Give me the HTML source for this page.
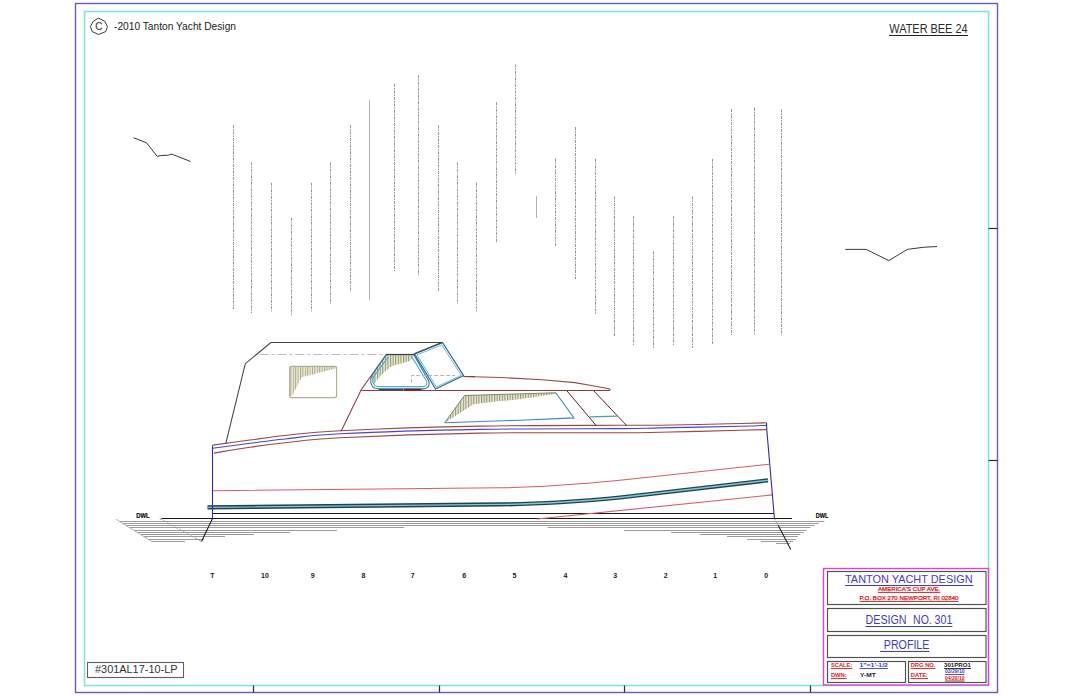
<!DOCTYPE html>
<html><head><meta charset="utf-8">
<style>
html,body{margin:0;padding:0;background:#fff;width:1073px;height:696px;overflow:hidden}
svg{position:absolute;left:0;top:0;display:block}
text{font-family:"Liberation Sans",sans-serif}
</style></head>
<body>
<svg width="1073" height="696" viewBox="0 0 1073 696">
<!-- borders -->
<rect x="75.5" y="3.5" width="922" height="689" fill="none" stroke="#6a5cc8" stroke-width="1.4"/>
<rect x="84.5" y="11.5" width="904" height="674" fill="none" stroke="#7fe6dc" stroke-width="1.6"/>
<g stroke="#2a2a60" stroke-width="1.2">
<line x1="253.5" y1="685.5" x2="253.5" y2="692.5"/>
<line x1="439.5" y1="685.5" x2="439.5" y2="692.5"/>
<line x1="624.5" y1="685.5" x2="624.5" y2="692.5"/>
<line x1="810.5" y1="685.5" x2="810.5" y2="692.5"/>
<line x1="988.5" y1="228.5" x2="997.5" y2="228.5"/>
<line x1="988.5" y1="460.5" x2="997.5" y2="460.5"/>
</g>
<!-- copyright -->
<polygon points="98.5,18.1 104.8,21.3 107.4,26.6 105.8,31.5 98.5,34.5 92.1,31.5 90.4,26.6 93.3,21.3" fill="none" stroke="#3a3a3a" stroke-width="1"/>
<text x="95.2" y="29.8" font-size="10" fill="#4a4a4a" stroke="#4a4a4a" stroke-width="0.25">C</text>
<text x="114" y="30" font-size="10.5" fill="#222" textLength="122" lengthAdjust="spacingAndGlyphs">-2010 Tanton Yacht Design</text>
<!-- title -->
<text x="889.3" y="32.6" font-size="12" fill="#2a2a2a" textLength="78.3" lengthAdjust="spacingAndGlyphs">WATER BEE 24</text>
<line x1="889" y1="35.5" x2="968" y2="35.5" stroke="#222" stroke-width="1.2"/>
<!-- birds -->
<polyline points="133.6,137.7 146.6,142.9 157.1,156.3 160.8,155.6 168.3,155.2 171.2,154.1 173.5,154.8 190.6,161.5" fill="none" stroke="#3a3a3a" stroke-width="1"/>
<polyline points="845.3,249.4 866.3,249.4 888.8,260.6 907.3,249.4 923.2,247.3 937,246.5" fill="none" stroke="#3a3a3a" stroke-width="1"/>
<!-- rain lines -->
<g stroke="#969696" stroke-width="1" stroke-dasharray="3 1 1.5 1">
<line x1="233.5" y1="125.0" x2="233.5" y2="309.0"/>
<line x1="251.5" y1="162.3" x2="251.5" y2="313.0"/>
<line x1="271.5" y1="182.8" x2="271.5" y2="311.4"/>
<line x1="291.5" y1="217.8" x2="291.5" y2="316.0"/>
<line x1="311.5" y1="182.8" x2="311.5" y2="311.4"/>
<line x1="330.5" y1="162.3" x2="330.5" y2="303.7"/>
<line x1="350.5" y1="125.0" x2="350.5" y2="292.0"/>
<line x1="369.5" y1="99.8" x2="369.5" y2="300.3" stroke-dasharray="none" stroke="#b2b2b2"/>
<line x1="394.5" y1="84.0" x2="394.5" y2="271.2"/>
<line x1="418.5" y1="75.2" x2="418.5" y2="275.3"/>
<line x1="438.5" y1="125.5" x2="438.5" y2="292.0"/>
<line x1="457.5" y1="162.3" x2="457.5" y2="303.6"/>
<line x1="476.5" y1="182.6" x2="476.5" y2="311.4"/>
<line x1="496.5" y1="102.2" x2="496.5" y2="243.0"/>
<line x1="515.5" y1="64.4" x2="515.5" y2="175.2"/>
<line x1="536.5" y1="196.0" x2="536.5" y2="218.1" stroke-dasharray="none" stroke="#b0b0b0"/>
<line x1="555.5" y1="158.5" x2="555.5" y2="246.5"/>
<line x1="575.5" y1="127.0" x2="575.5" y2="279.0"/>
<line x1="595.5" y1="158.9" x2="595.5" y2="313.9"/>
<line x1="614.5" y1="196.5" x2="614.5" y2="337.2"/>
<line x1="633.5" y1="216.1" x2="633.5" y2="346.1"/>
<line x1="653.5" y1="251.4" x2="653.5" y2="349.2"/>
<line x1="673.5" y1="216.1" x2="673.5" y2="346.1"/>
<line x1="692.5" y1="196.5" x2="692.5" y2="348.0"/>
<line x1="712.5" y1="158.9" x2="712.5" y2="344.2"/>
<line x1="731.5" y1="109.0" x2="731.5" y2="335.2"/>
<line x1="754.5" y1="107.7" x2="754.5" y2="335.2"/>
<line x1="781.5" y1="109.5" x2="781.5" y2="335.2"/>
</g>

<!-- ===== BOAT ===== -->
<defs>
<pattern id="hatch" patternUnits="userSpaceOnUse" width="2.4" height="10">
<rect width="2.4" height="10" fill="#eeeed8"/>
<rect x="0" width="1" height="10" fill="#a8a888"/>
</pattern>
<pattern id="hatch2" patternUnits="userSpaceOnUse" width="2.6" height="10">
<rect width="2.6" height="10" fill="#ececd4"/>
<rect x="0" width="1.1" height="10" fill="#949474"/>
</pattern>
</defs>
<!-- water hatching -->
<g stroke="#9c9c9c" stroke-width="1">
<line x1="119.6" y1="521.5" x2="824.3" y2="521.5"/>
<line x1="122.9" y1="523.5" x2="818.7" y2="523.5"/>
<line x1="126.1" y1="525.5" x2="814.6" y2="525.5"/>
<line x1="129.3" y1="527.5" x2="404" y2="527.5"/>
<line x1="547.7" y1="527.5" x2="810.4" y2="527.5"/>
<line x1="134.1" y1="530.5" x2="337" y2="530.5"/>
<line x1="624" y1="530.5" x2="806.6" y2="530.5"/>
<line x1="137.4" y1="532.5" x2="290" y2="532.5"/>
<line x1="671" y1="532.5" x2="803.8" y2="532.5"/>
<line x1="140.6" y1="534.5" x2="254" y2="534.5"/>
<line x1="700" y1="534.5" x2="800.4" y2="534.5"/>
<line x1="143.8" y1="536.5" x2="225" y2="536.5"/>
<line x1="727" y1="536.5" x2="797.8" y2="536.5"/>
<line x1="148.6" y1="539.5" x2="204" y2="539.5"/>
<line x1="747" y1="539.5" x2="795.9" y2="539.5"/>
<line x1="151.8" y1="541.5" x2="185" y2="541.5"/>
<line x1="761" y1="541.5" x2="793.1" y2="541.5"/>
<line x1="776" y1="543.5" x2="790.3" y2="543.5"/>
<line x1="116.1" y1="519.3" x2="152" y2="541.6" stroke="#b0b0b0"/>
</g>
<line x1="161.5" y1="518.5" x2="792" y2="518.5" stroke="#1a1a1a" stroke-width="1.1"/>
<line x1="212.5" y1="513.5" x2="774" y2="513.5" stroke="#1a1a1a" stroke-width="1"/>
<!-- skegs -->
<polyline points="212.5,518.5 201.5,541.5" fill="none" stroke="#222" stroke-width="1.1"/>
<line x1="201.5" y1="541.5" x2="159.7" y2="518.5" stroke="#999" stroke-width="1" stroke-dasharray="3 1.5"/>
<polyline points="778.2,525.2 790.8,549.4" fill="none" stroke="#222" stroke-width="1.1"/>
<line x1="774.5" y1="518.5" x2="778.2" y2="525.2" stroke="#999" stroke-width="1" stroke-dasharray="2 1"/>
<!-- DWL text -->
<text x="136.3" y="518" font-size="6.6" font-weight="bold" fill="#111" stroke="#111" stroke-width="0.2" textLength="13.4" lengthAdjust="spacingAndGlyphs">DWL</text>
<text x="815.7" y="518" font-size="6.6" font-weight="bold" fill="#111" stroke="#111" stroke-width="0.2" textLength="12.8" lengthAdjust="spacingAndGlyphs">DWL</text>

<!-- hull stripes -->
<path d="M212.5,490.7 L500,487.8 C540,487.4 575,484.6 620,480.3 L769,464.2" fill="none" stroke="#e05868" stroke-width="1.1"/>
<path d="M537,519 C580,515 680,504.5 772,494.9" fill="none" stroke="#e05868" stroke-width="1.1"/>
<!-- rubrail -->
<path d="M207.5,507.3 L500,504.4 C540,504.1 575,501.8 620,497.5 L768,480.3" fill="none" stroke="#1c4454" stroke-width="4.2"/>
<path d="M207.5,507.3 L500,504.4 C540,504.1 575,501.8 620,497.5 L768,480.3" fill="none" stroke="#88c4da" stroke-width="1.3"/>

<!-- sheer lines -->
<path d="M212.5,445.10 C218.8,444.25 237.9,441.60 250.0,440.00 C262.1,438.40 270.0,437.05 285.0,435.50 C300.0,433.95 307.5,432.27 340.0,430.70 C372.5,429.13 433.3,427.00 480.0,426.10 C526.7,425.20 590.0,425.45 620.0,425.30 C650.0,425.15 640.0,425.50 660.0,425.20 C680.0,424.90 722.2,423.90 740.0,423.50 C757.8,423.10 762.1,422.92 766.5,422.80" fill="none" stroke="#9c4848" stroke-width="1.1"/>
<path d="M212.5,448.20 C218.8,447.38 237.9,444.83 250.0,443.30 C262.1,441.77 270.0,440.58 285.0,439.00 C300.0,437.42 307.5,435.40 340.0,433.80 C372.5,432.20 433.3,430.27 480.0,429.40 C526.7,428.53 590.0,428.85 620.0,428.60 C650.0,428.35 640.0,428.28 660.0,427.90 C680.0,427.52 722.2,426.72 740.0,426.30 C757.8,425.88 762.1,425.55 766.5,425.40" fill="none" stroke="#4444d8" stroke-width="1.1"/>
<path d="M214.0,453.10 C220.0,452.12 238.2,448.92 250.0,447.20 C261.8,445.48 270.0,444.37 285.0,442.80 C300.0,441.23 307.5,439.42 340.0,437.80 C372.5,436.18 433.3,433.93 480.0,433.10 C526.7,432.27 590.0,432.93 620.0,432.80 C650.0,432.67 640.0,432.72 660.0,432.30 C680.0,431.88 722.2,430.75 740.0,430.30 C757.8,429.85 762.1,429.72 766.5,429.60" fill="none" stroke="#9c4848" stroke-width="1.1"/>
<!-- transom & bow -->
<line x1="212.5" y1="445.4" x2="212.5" y2="518.5" stroke="#3428b4" stroke-width="1.1"/>
<polyline points="766.5,422.7 766.8,430 774,513.5 774.5,518.5" fill="none" stroke="#3428b4" stroke-width="1.1"/>

<!-- canopy -->
<polyline points="225.7,443.8 245.3,363.7 270.9,342.5 442.5,342.5" fill="none" stroke="#34483c" stroke-width="1.05"/>
<line x1="259.4" y1="354.5" x2="387" y2="354.5" stroke="#bdbdbd" stroke-width="1" stroke-dasharray="9 3 3 3"/>
<!-- small window -->
<path d="M289.6,366.4 L336.6,366.4 L335.2,368.8 C325,371 316.7,373.5 316.7,373.5 C308,375.5 301.9,377.3 301.9,377.3 L292.1,395.8 L289.6,395.8 Z" fill="url(#hatch)" stroke="none"/>
<rect x="289.6" y="366.4" width="47" height="31.2" rx="2" fill="none" stroke="#b0b094" stroke-width="1.15"/>

<!-- cabin aft line -->
<polyline points="341.1,431.2 361.2,389.8 386.3,354.5" fill="none" stroke="#8c3c3c" stroke-width="1.05"/>
<!-- canopy side window -->
<path d="M386.3,355 L413.8,355 L410.5,360.5 C404,363 396,364.5 391.1,366.5 C384,372 378,378 374.4,384 L371.6,381.5 L372,375.5 Z" fill="url(#hatch2)"/>
<path d="M386.4,354.6 L371.8,375.4 Q370.2,378.2 370.8,382.5 Q372,388.8 378.5,388.8 L424.2,388.8 Q430.6,387.5 428.8,381 L413.8,354.6" fill="none" stroke="#2f7aa8" stroke-width="1.15"/>
<path d="M388.3,356.8 L373.8,376.4 Q372.6,378.8 372.9,382.2 Q373.9,386.6 378.9,386.6 L423.6,386.6 Q427.8,385.8 426.6,381.2 L411.8,356.6" fill="none" stroke="#52acd8" stroke-width="1.1"/>
<line x1="386" y1="354.5" x2="414.5" y2="354.5" stroke="#3a3a3a" stroke-width="1.2"/>
<!-- windshield -->
<polygon points="414.5,353.8 442.5,342.4 463.6,375.6 435.6,389" fill="none" stroke="#2f6a8e" stroke-width="1.15"/>
<polygon points="416.9,354.9 441.8,344.9 461.2,375.3 436.4,387" fill="none" stroke="#5ab2dc" stroke-width="0.9"/>
<line x1="414.5" y1="353.8" x2="442.5" y2="342.4" stroke="#3c4c5c" stroke-width="1.3"/>
<!-- dashed inner -->
<polyline points="411.5,382.8 411.5,375.5 455,375.5" fill="none" stroke="#b4b4b4" stroke-width="1" stroke-dasharray="4 2"/>
<!-- cabin roof -->
<line x1="361.2" y1="390.5" x2="609.7" y2="390.5" stroke="#8c3c3c" stroke-width="1.1"/>
<line x1="379" y1="389.6" x2="403" y2="389.6" stroke="#2a4a6a" stroke-width="1.2"/>
<line x1="404" y1="389.6" x2="421.5" y2="389.6" stroke="#8a1010" stroke-width="1.4"/>
<path d="M463.6,376.5 L501.2,377.5 L542.4,379.8 L574.8,382.6 L592.9,385.8 L608.8,388.8 Q611,390 609.5,390.5" fill="none" stroke="#9c4848" stroke-width="1.1"/>
<line x1="463.6" y1="376.5" x2="475" y2="376.6" stroke="#8c3c3c" stroke-width="1.2"/>

<!-- cabin side window -->
<path d="M444.7,422.8 L464.4,395.5 L555.8,392.8 L556.6,393.8 C540,396 520,400 499.6,401 L473.6,404.3 Z" fill="url(#hatch2)"/>
<polyline points="444.7,422.8 464.4,395.5 555.8,392.8" fill="none" stroke="#7a8a6a" stroke-width="1"/>
<polyline points="444.7,422.8 520,420.2 574,417.9 555.8,392.8" fill="none" stroke="#3a8ab8" stroke-width="1.1"/>
<!-- windshield lower -->
<line x1="566.9" y1="390.8" x2="596.5" y2="426" stroke="#5a2a2a" stroke-width="1"/>
<line x1="593.7" y1="390.8" x2="626.9" y2="425.8" stroke="#5a2a2a" stroke-width="1"/>
<line x1="589.8" y1="416.9" x2="617.5" y2="416.1" stroke="#4a9ac8" stroke-width="1.1"/>
<!-- stations -->
<g font-size="7" font-weight="bold" fill="#222" text-anchor="middle">
<text x="212.4" y="578.2">T</text>
<text x="264.9" y="578.2">10</text>
<text x="312.7" y="578.2">9</text>
<text x="363.5" y="578.2">8</text>
<text x="412.7" y="578.2">7</text>
<text x="464.2" y="578.2">6</text>
<text x="514.5" y="578.2">5</text>
<text x="565.5" y="578.2">4</text>
<text x="615.1" y="578.2">3</text>
<text x="665.7" y="578.2">2</text>
<text x="715.3" y="578.2">1</text>
<text x="766.1" y="578.2">0</text>
</g>

<!-- drawing number -->
<rect x="87.5" y="662.5" width="96" height="15" fill="none" stroke="#606060" stroke-width="1.1"/>
<text x="95" y="673.3" font-size="10.5" fill="#333" textLength="82.5" lengthAdjust="spacingAndGlyphs">#301AL17-10-LP</text>

<!-- title block -->
<rect x="823.5" y="568.5" width="165" height="116.5" fill="none" stroke="#e040e0" stroke-width="1.4"/>
<g fill="none" stroke="#505050" stroke-width="1.15">
<rect x="827.5" y="571.5" width="158.5" height="33"/>
<rect x="827.5" y="608.5" width="158.5" height="23"/>
<rect x="827.5" y="635.5" width="158.5" height="22"/>
<rect x="827.5" y="661.5" width="78" height="21"/>
<rect x="908.5" y="661.5" width="77.5" height="21"/>
</g>
<text x="845" y="583.1" font-size="11.8" fill="#3c3ccc" textLength="127.6" lengthAdjust="spacingAndGlyphs">TANTON YACHT DESIGN</text>
<line x1="845" y1="585.5" x2="973.4" y2="585.5" stroke="#3c3ccc" stroke-width="1.1"/>
<text x="878" y="591.1" font-size="5.6" fill="#e02020" stroke="#e02020" stroke-width="0.25" textLength="62.3" lengthAdjust="spacingAndGlyphs">AMERICA'S CUP AVE.</text>
<line x1="878" y1="592.5" x2="940.3" y2="592.5" stroke="#e02020" stroke-width="0.9"/>
<text x="859.6" y="599.5" font-size="5.8" fill="#e02020" stroke="#e02020" stroke-width="0.25" textLength="98.9" lengthAdjust="spacingAndGlyphs">P.O. BOX 270 NEWPORT, RI 02840</text>
<line x1="859.6" y1="601.5" x2="958.5" y2="601.5" stroke="#e02020" stroke-width="0.9"/>

<text x="865.5" y="623.9" font-size="12" fill="#3c3ccc" textLength="41.1" lengthAdjust="spacingAndGlyphs">DESIGN</text>
<text x="913.1" y="623.9" font-size="12" fill="#3c3ccc" textLength="18.7" lengthAdjust="spacingAndGlyphs">NO.</text>
<text x="934.6" y="623.9" font-size="12" fill="#3c3ccc" textLength="17.8" lengthAdjust="spacingAndGlyphs">301</text>
<line x1="865.5" y1="626.5" x2="952.4" y2="626.5" stroke="#3c3ccc" stroke-width="1.1"/>
<text x="883.8" y="649.3" font-size="12" fill="#3c3ccc" textLength="45.6" lengthAdjust="spacingAndGlyphs">PROFILE</text>
<line x1="880" y1="651.5" x2="929.4" y2="651.5" stroke="#3c3ccc" stroke-width="1.1"/>

<text x="830.9" y="666.9" font-size="6" font-weight="bold" fill="#e02020" textLength="21.5" lengthAdjust="spacingAndGlyphs">SCALE:</text>
<line x1="830.9" y1="668.5" x2="852.4" y2="668.5" stroke="#e02020" stroke-width="0.9"/>
<text x="859.5" y="666.9" font-size="5.5" font-weight="bold" fill="#3c3ccc" textLength="28.4" lengthAdjust="spacingAndGlyphs">1"=1'-1/2</text>
<line x1="859.5" y1="668.5" x2="887.9" y2="668.5" stroke="#3c3ccc" stroke-width="0.9"/>
<text x="830.9" y="676.8" font-size="6" font-weight="bold" fill="#e02020" textLength="15.9" lengthAdjust="spacingAndGlyphs">DWN:</text>
<line x1="830.9" y1="678.5" x2="846.8" y2="678.5" stroke="#e02020" stroke-width="0.9"/>
<text x="859.9" y="676.8" font-size="6" font-weight="bold" fill="#222" textLength="15.8" lengthAdjust="spacingAndGlyphs">Y-MT</text>
<text x="910.7" y="666.9" font-size="6" font-weight="bold" fill="#e02020" textLength="24.8" lengthAdjust="spacingAndGlyphs">DRG NO.</text>
<line x1="910.7" y1="668.5" x2="935.5" y2="668.5" stroke="#e02020" stroke-width="0.9"/>
<text x="944" y="666.9" font-size="6" font-weight="bold" fill="#222" textLength="27" lengthAdjust="spacingAndGlyphs">301PRO1</text>
<line x1="944" y1="668.5" x2="971" y2="668.5" stroke="#222" stroke-width="0.9"/>
<text x="910.7" y="676.8" font-size="6" font-weight="bold" fill="#e02020" textLength="17.3" lengthAdjust="spacingAndGlyphs">DATE:</text>
<line x1="910.7" y1="678.5" x2="928" y2="678.5" stroke="#e02020" stroke-width="0.9"/>
<text x="944.9" y="673" font-size="4.5" font-weight="bold" fill="#3c3ccc" textLength="19.6" lengthAdjust="spacingAndGlyphs">03/29/10</text>
<line x1="944.9" y1="674.5" x2="964.5" y2="674.5" stroke="#3c3ccc" stroke-width="0.9"/>
<text x="944.9" y="679.6" font-size="4.5" font-weight="bold" fill="#e02020" textLength="19.6" lengthAdjust="spacingAndGlyphs">04/20/10</text>
<line x1="944.9" y1="681" x2="964.5" y2="681" stroke="#8a1a1a" stroke-width="0.9"/>
</svg>
</body></html>
